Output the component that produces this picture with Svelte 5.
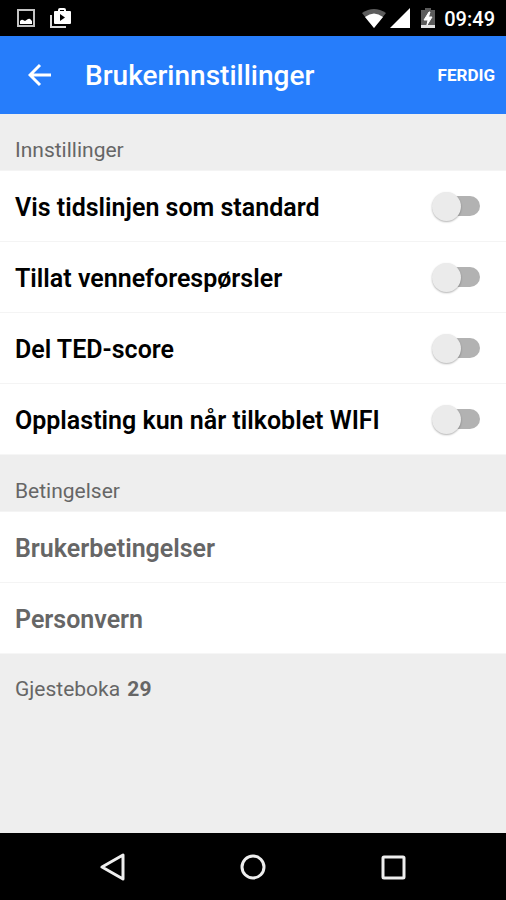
<script lang="ts">
	let settings = $state([
		{ id: 'timeline', label: 'Vis tidslinjen som standard', on: false },
		{ id: 'requests', label: 'Tillat venneforespørsler', on: false },
		{ id: 'score', label: 'Del TED-score', on: false },
		{ id: 'wifi', label: 'Opplasting kun når tilkoblet WIFI', on: false }
	]);

	const terms = ['Brukerbetingelser', 'Personvern'];
	const guests = 29;
</script>

<div class="screen">
	<div class="status-bar">
		<div class="status-group notices">
			<svg width="18" height="18" viewBox="0 0 18 18" aria-hidden="true">
				<rect x="1" y="1" width="16" height="16" fill="none" stroke="#c4c4c4" stroke-width="2" />
				<path d="M3 15v-3q2-2 3-1l2 1 3-2q2-1 3 1l1 1v3z" fill="#fff" />
			</svg>
			<svg width="21" height="20" viewBox="0 0 21 20" aria-hidden="true">
				<path d="M1 7v12h15" fill="none" stroke="#ddd" stroke-width="2" />
				<path
					fill="#fff"
					fill-rule="evenodd"
					d="M8 3V2q0-2 2-2h4q2 0 2 2v1h4q1 0 1 1v11q0 1-1 1H5q-1 0-1-1V4q0-1 1-1zm2 0h4V2h-4zm0 3v7l5-3.500z"
				/>
			</svg>
		</div>
		<div class="status-group">
			<svg class="wifi" width="24" height="19" viewBox="0 0 24 19" aria-hidden="true">
				<path d="M0 4Q12-4 24 4L12 19z" fill="#5c5c5c" />
				<path d="M3 8Q12 1 21 8L12 19z" fill="#fff" />
			</svg>
			<svg class="signal" width="20" height="20" viewBox="0 0 20 20" aria-hidden="true">
				<path d="M20 0v20H0z" fill="#fff" />
			</svg>
			<svg class="battery" width="14" height="20" viewBox="0 0 14 20" aria-hidden="true">
				<path d="M4 0h6v2h4v18H0V2h4z" fill="#5c5c5c" />
				<path d="M0 17h14v3H0z" fill="#e4e4e4" />
				<path d="M8 4 3 12h4l-1 5 5-8H7.500L9 4z" fill="#fff" stroke="#fff" />
			</svg>
			<span class="clock">09:49</span>
		</div>
	</div>

	<header class="app-bar">
		<button class="back" aria-label="Tilbake">
			<svg width="24" height="24" viewBox="0 0 24 24" aria-hidden="true">
				<path d="M23 12H2M12 2 2 12l10 10" fill="none" stroke="#fff" stroke-width="3" />
			</svg>
		</button>
		<h1>Brukerinnstillinger</h1>
		<button class="done">FERDIG</button>
	</header>

	<main>
		<h2>Innstillinger</h2>
		<div class="group">
			{#each settings as setting (setting.id)}
				<label class="row" for={setting.id}>
					<span class="text">{setting.label}</span>
					<input class="switch" type="checkbox" role="switch" id={setting.id} bind:checked={setting.on} />
				</label>
			{/each}
		</div>

		<h2>Betingelser</h2>
		<div class="group">
			{#each terms as term}
				<a class="row link" href="#{term.toLowerCase()}"><span class="text">{term}</span></a>
			{/each}
		</div>

		<p class="guestbook">Gjesteboka <strong>{guests}</strong></p>
	</main>

	<nav class="nav-bar" aria-label="System">
		<button aria-label="Tilbake">
			<svg width="28" height="28" viewBox="0 0 28 28" aria-hidden="true">
				<path d="M24 2v24L3 14z" />
			</svg>
		</button>
		<button aria-label="Hjem">
			<svg width="28" height="28" viewBox="0 0 28 28" aria-hidden="true">
				<circle cx="14" cy="14" r="11" />
			</svg>
		</button>
		<button aria-label="Oversikt">
			<svg width="28" height="28" viewBox="0 0 28 28" aria-hidden="true">
				<rect x="4" y="4" width="21" height="21" rx="1" />
			</svg>
		</button>
	</nav>
</div>

<style>
	:global(body) {
		margin: 0;
	}

	.screen {
		display: flex;
		flex-direction: column;
		min-height: 100vh;
		background: #eee;
		color: #000;
		font-family: Roboto, 'Noto Sans', sans-serif;
	}

	button {
		display: flex;
		align-items: center;
		justify-content: center;
		padding: 0;
		border: none;
		background: none;
		color: inherit;
		font: inherit;
		cursor: pointer;
	}

	svg {
		display: block;
	}

	.status-bar {
		display: flex;
		align-items: center;
		justify-content: space-between;
		height: 36px;
		padding: 0 11px 0 17px;
		background: #000;
		color: #fff;
	}

	.status-group {
		display: flex;
		align-items: center;
	}

	.notices {
		gap: 15px;
	}

	.signal {
		margin-left: 4px;
	}

	.battery {
		margin: 0 9px 0 11px;
	}

	.clock {
		padding-top: 2px;
		font-size: 20px;
		font-weight: 500;
		line-height: 24px;
	}

	.app-bar {
		display: flex;
		align-items: center;
		height: 78px;
		padding: 0 11px 0 16px;
		background: #267dfb;
		color: #fff;
	}

	.back {
		width: 48px;
		height: 48px;
	}

	h1 {
		flex: 1;
		margin: 0;
		padding: 2px 0 0 21px;
		font-size: 28px;
		font-weight: 500;
		line-height: 32px;
	}

	.done {
		height: 48px;
		font-size: 17px;
		font-weight: 700;
	}

	main {
		flex: 1;
	}

	h2,
	.guestbook {
		margin: 0;
		padding: 24px 15px 8px;
		color: #666;
		font-size: 21px;
		font-weight: 400;
		line-height: 24px;
	}

	.guestbook {
		padding-top: 23px;
	}

	.guestbook strong {
		margin-left: 2px;
	}

	.group {
		border-bottom: 1px solid #f6f6f6;
		background: #fff;
	}

	.row {
		display: flex;
		align-items: center;
		justify-content: space-between;
		min-height: 70px;
		padding: 0 26px 0 15px;
		border-top: 1px solid #f4f4f4;
		font-size: 25px;
		font-weight: 600;
		line-height: 30px;
	}

	.text {
		padding-top: 3px;
	}

	.link {
		color: #666;
		text-decoration: none;
	}

	.switch {
		display: flex;
		align-items: center;
		flex: none;
		appearance: none;
		width: 45px;
		height: 20px;
		margin: 0;
		border-radius: 10px;
		background: #b2b2b2;
		cursor: pointer;
	}

	.switch::before {
		width: 29px;
		height: 29px;
		margin-left: -3px;
		border-radius: 50%;
		background: #ebebeb;
		box-shadow: 0 1px 2px rgba(0, 0, 0, 0.3);
		content: '';
	}

	.switch:checked {
		background: #93befd;
	}

	.switch:checked::before {
		margin-left: 19px;
		background: #267dfb;
	}

	.nav-bar {
		display: flex;
		align-items: center;
		justify-content: center;
		gap: 92px;
		height: 67px;
		background: #000;
	}

	.nav-bar button {
		width: 48px;
		height: 48px;
	}

	.nav-bar svg {
		fill: none;
		stroke: #eee;
		stroke-width: 3;
		stroke-linejoin: round;
	}
</style>
